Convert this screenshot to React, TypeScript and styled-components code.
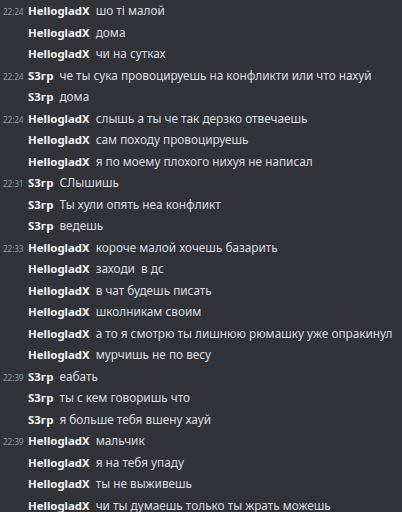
import { createGlobalStyle } from "styled-components";
import styled from "styled-components";

const GlobalStyle = createGlobalStyle`
  html, body {
    margin: 0;
    padding: 0;
    background: #313338;
  }
`;

const Log = styled.div`
  display: flex;
  flex-direction: column;
  width: 402px;
  height: 512px;
  overflow: hidden;
  background: #313338;
  font-family: "Noto Sans", "Open Sans", sans-serif;
`;

const Row = styled.div`
  display: flex;
  align-items: baseline;
  height: 21.5px;
  line-height: 21.5px;
  flex-shrink: 0;
  white-space: pre;
`;

const Time = styled.span`
  width: 27px;
  padding-left: 3px;
  box-sizing: border-box;
  font-size: 8.4px;
  color: #949ba4;
  letter-spacing: -0.2px;
`;

const Author = styled.span`
  margin-left: 1px;
  font-size: 11.4px;
  font-weight: 700;
  color: #f2f3f5;
`;

const Text = styled.span`
  margin-left: 6px;
  font-size: 11.8px;
  color: #dbdee1;
`;

const H = "HellogladX";
const S = "S3гр";

const messages: [string, string, string][] = [
  ["22:24", H, "шо ті малой"],
  ["", H, "дома"],
  ["", H, "чи на сутках"],
  ["22:24", S, "че ты сука провоцируешь на конфликти или что нахуй"],
  ["", S, "дома"],
  ["22:24", H, "слышь а ты че так дерзко отвечаешь"],
  ["", H, "сам походу провоцируешь"],
  ["", H, "я по моему плохого нихуя не написал"],
  ["22:31", S, "СЛышишь"],
  ["", S, "Ты хули опять неа конфликт"],
  ["", S, "ведешь"],
  ["22:33", H, "короче малой хочешь базарить"],
  ["", H, "заходи  в дс"],
  ["", H, "в чат будешь писать"],
  ["", H, "школникам своим"],
  ["", H, "а то я смотрю ты лишнюю рюмашку уже опракинул"],
  ["", H, "мурчишь не по весу"],
  ["22:39", S, "еабать"],
  ["", S, "ты с кем говоришь что"],
  ["", S, "я больше тебя вшену хауй"],
  ["22:39", H, "мальчик"],
  ["", H, "я на тебя упаду"],
  ["", H, "ты не выживешь"],
  ["", H, "чи ты думаешь только ты жрать можешь"],
];

export default function App() {
  return (
    <>
      <GlobalStyle />
      <Log>
        {messages.map(([time, author, text], i) => (
          <Row key={i}>
            <Time>{time}</Time>
            <Author>{author}</Author>
            <Text>{text}</Text>
          </Row>
        ))}
      </Log>
    </>
  );
}
